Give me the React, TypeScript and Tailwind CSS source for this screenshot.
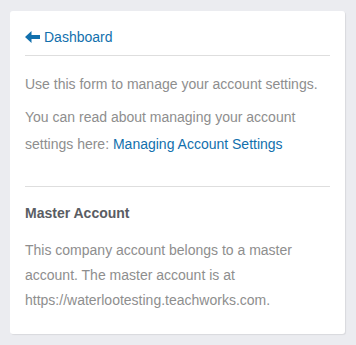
import React from "react";

export default function App() {
  return (
    <div className="min-h-[345px] w-[356px] bg-[#ebecf0] pt-[11px] pl-[10px]" style={{ fontFamily: '"Liberation Sans", Arial, sans-serif' }}>
      <div className="w-[335px] h-[323px] bg-white rounded-[3px] shadow-[1px_1px_1px_rgba(0,0,0,0.08)] px-[15px] pt-[16px]">
        <a href="#" className="flex items-center gap-[4px] text-[14px] leading-[20px] text-[#1270ad]">
          <svg width="15" height="12" viewBox="0 0 15 12" className="shrink-0">
            <polygon points="0,6 6.5,0 6.5,4 15,4 15,8 6.5,8 6.5,12" fill="#1270ad" />
          </svg>
          <span>Dashboard</span>
        </a>
        <div className="mt-[8px] h-px bg-[#dedede]" />
        <p className="mt-[15px] text-[14px] leading-[26px] text-[#8e8e8e]">Use this form to manage your account settings.</p>
        <p className="mt-[7px] text-[14px] leading-[27px] text-[#8e8e8e]">
          You can read about managing your account settings here:{" "}
          <span className="text-[#1270ad]">Managing Account Settings</span>
        </p>
        <div className="mt-[28px] h-px bg-[#dedede]" />
        <h3 className="mt-[16px] text-[14px] leading-[20px] font-bold text-[#5a5d63]">Master Account</h3>
        <p className="mt-[15px] text-[14px] leading-[25px] text-[#8e8e8e]">
          This company account belongs to a master account. The master account is at https://waterlootesting.teachworks.com.
        </p>
      </div>
    </div>
  );
}
